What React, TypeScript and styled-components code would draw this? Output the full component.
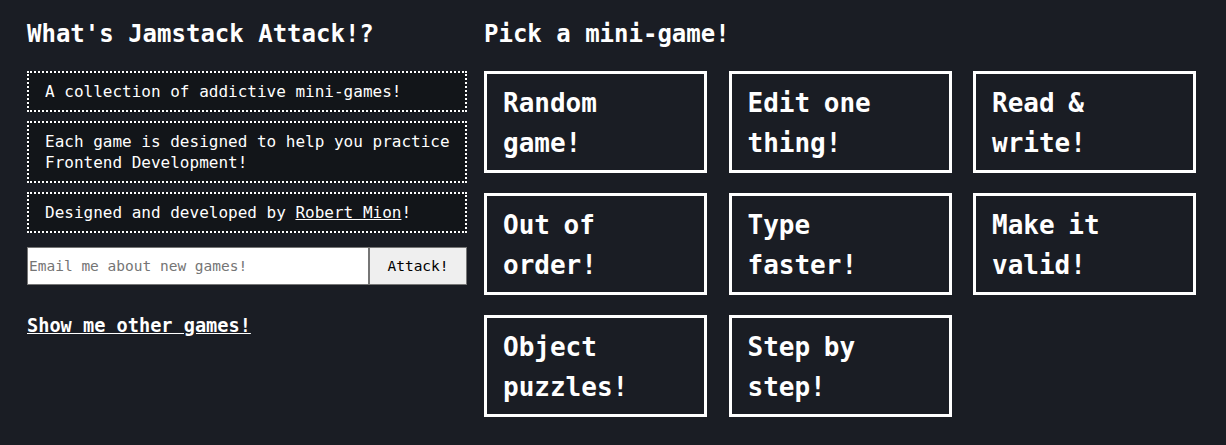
import styled, { createGlobalStyle } from 'styled-components';

const GlobalStyle = createGlobalStyle`
  html, body {
    margin: 0;
    background: #1a1d24;
  }
  body {
    font-family: 'DejaVu Sans Mono', 'Liberation Mono', monospace;
    color: #ffffff;
  }
`;

const games: string[] = [
  'Random game!',
  'Edit one thing!',
  'Read & write!',
  'Out of order!',
  'Type faster!',
  'Make it valid!',
  'Object puzzles!',
  'Step by step!',
];

const about: React.ReactNode[] = [
  'A collection of addictive mini-games!',
  'Each game is designed to help you practice Frontend Development!',
  <>
    Designed and developed by <a href="#">Robert Mion</a>!
  </>,
];

const Page = styled.main`
  display: flex;
  align-items: flex-start;
  gap: 17px;
  padding: 20px 27px;
  min-height: 445px;
  box-sizing: border-box;
  background: #1a1d24;
`;

const Column = styled.section<{ $width?: number }>`
  width: ${({ $width }) => ($width ? `${$width}px` : 'auto')};
  flex-shrink: 0;
`;

const Heading = styled.h2`
  margin: 0 0 22px;
  font-size: 24px;
  line-height: 29px;
  font-weight: 700;
  color: #ffffff;
`;

const InfoBox = styled.p`
  margin: 0 0 9px;
  padding: 8px 10px 8px 16px;
  border: 2px dotted #ffffff;
  background: #121519;
  font-size: 16px;
  line-height: 21px;
  color: #ffffff;

  a {
    color: #ffffff;
    text-decoration: underline;
  }
`;

const SignupForm = styled.form`
  display: flex;
  margin-top: 14px;
  height: 38px;
`;

const EmailInput = styled.input`
  flex: 1;
  min-width: 0;
  margin: 0;
  padding: 0 1px;
  border: 1px solid #767676;
  border-right-width: 2px;
  background: #ffffff;
  font-family: 'DejaVu Sans Mono', 'Liberation Mono', monospace;
  font-size: 14.5px;
  color: #222;

  &::placeholder {
    color: #757575;
  }
`;

const SubmitButton = styled.button`
  width: 97px;
  margin: 0;
  border: 1px solid #767676;
  border-left: none;
  background: #efefef;
  font-family: 'DejaVu Sans Mono', 'Liberation Mono', monospace;
  font-size: 14.5px;
  color: #000;
`;

const OtherGames = styled.a`
  display: inline-block;
  margin-top: 29px;
  font-size: 18.6px;
  line-height: 23px;
  font-weight: 700;
  color: #ffffff;
  text-decoration: underline;
`;

const GameGrid = styled.div`
  display: grid;
  grid-template-columns: repeat(3, 223px);
  grid-auto-rows: 102px;
  gap: 20px 21.5px;
`;

const GameTile = styled.a`
  box-sizing: border-box;
  display: block;
  padding: 9px 16px;
  border: 3px solid #ffffff;
  background: #1a1d24;
  font-size: 26px;
  line-height: 40px;
  font-weight: 700;
  color: #ffffff;
  text-decoration: none;
  word-spacing: -2px;
`;

export default function App() {
  return (
    <>
      <GlobalStyle />
      <Page>
        <Column $width={440}>
          <Heading>What's Jamstack Attack!?</Heading>
          {about.map((item, i) => (
            <InfoBox key={i}>{item}</InfoBox>
          ))}
          <SignupForm onSubmit={(e) => e.preventDefault()}>
            <EmailInput type="email" placeholder="Email me about new games!" />
            <SubmitButton type="submit">Attack!</SubmitButton>
          </SignupForm>
          <OtherGames href="#">Show me other games!</OtherGames>
        </Column>
        <Column>
          <Heading>Pick a mini-game!</Heading>
          <GameGrid>
            {games.map((game) => (
              <GameTile key={game} href="#">
                {game}
              </GameTile>
            ))}
          </GameGrid>
        </Column>
      </Page>
    </>
  );
}
